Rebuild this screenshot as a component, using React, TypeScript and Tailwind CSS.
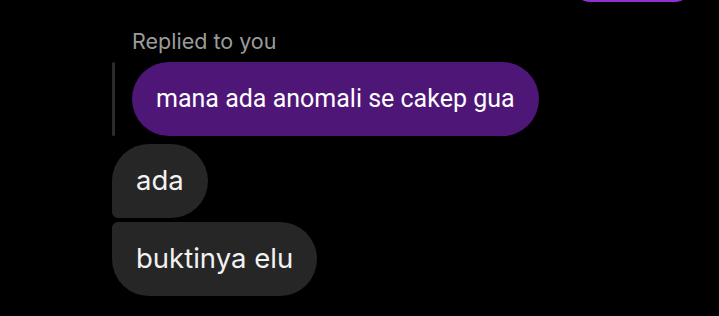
export default function App() {
  return (
    <div className="w-[719px] h-[316px] bg-black overflow-hidden flex flex-col">
      {/* tail of the previous outgoing bubble */}
      <div className="flex justify-end pr-[25px]">
        <div className="w-[123px] h-[40px] -mt-[38px] rounded-b-[20px] bg-[#8f30d8]" />
      </div>

      <div
        className="ml-[132px] mt-[26px] text-[21.5px] leading-[26px] text-[#9b9b9b]"
        style={{ fontFamily: 'Inter, Roboto, sans-serif' }}
      >
        Replied to you
      </div>

      {/* quoted message */}
      <div className="flex ml-[112px] mt-[8px]">
        <div className="w-[3px] bg-[#2b2b2b] rounded-full" />
        <div
          className="ml-[17px] h-[74px] px-[24px] flex items-center rounded-full bg-[#4d1677] text-white text-[25px]"
          style={{ fontFamily: 'Roboto, sans-serif' }}
        >
          mana ada anomali se cakep gua
        </div>
      </div>

      {/* replies */}
      <div className="flex flex-col items-start ml-[112px] mt-[8px] gap-[4px]" style={{ fontFamily: 'Inter, Roboto, sans-serif' }}>
        <div className="h-[74px] px-[24px] flex items-center rounded-[37px] rounded-bl-[6px] bg-[#262626] text-[#f2f2f2] text-[27.5px]">
          ada
        </div>
        <div className="h-[74px] px-[24px] flex items-center rounded-[37px] rounded-tl-[6px] bg-[#262626] text-[#f2f2f2] text-[27.5px]">
          buktinya elu
        </div>
      </div>
    </div>
  );
}
